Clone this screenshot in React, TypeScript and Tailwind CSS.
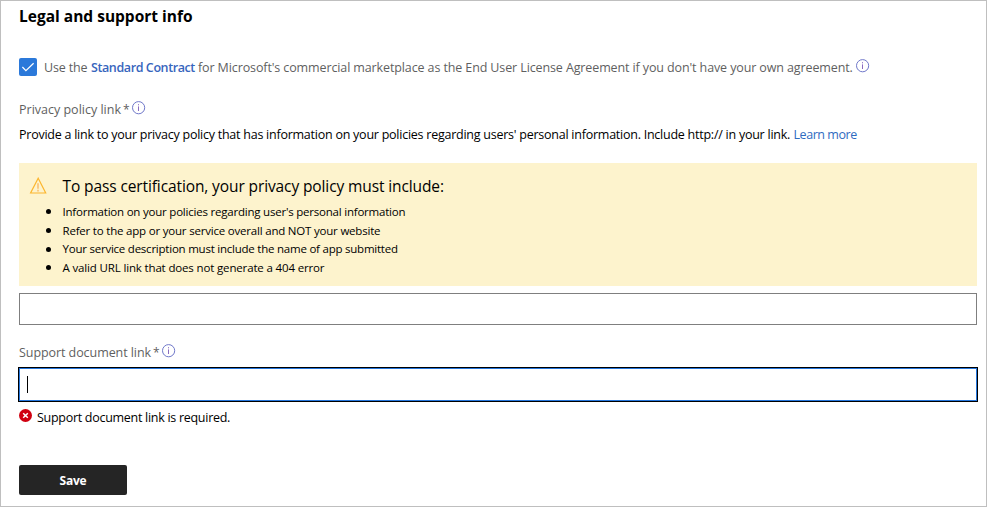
function InfoIcon({ className = "" }: { className?: string }) {
  return (
    <svg viewBox="0 0 14 14" className={"h-[14px] w-[14px] shrink-0 " + className} fill="none">
      <circle cx="6.6" cy="6.7" r="6.1" stroke="#6871c6" strokeWidth="0.95" />
      <path d="M6.5 3.2v1.1M6.5 5.4v4.6" stroke="#8a6cc0" strokeWidth="1" />
    </svg>
  );
}

function WarningIcon() {
  return (
    <svg viewBox="0 0 18 17" className="h-[17px] w-[18px] shrink-0" fill="none">
      <path d="M9.2 1.2 16.7 16H1.6Z" stroke="#fcb62f" strokeWidth="1.2" />
      <path d="M9 6.3v5.4M9 12.8v1.6" stroke="#f7a94a" strokeWidth="1.1" />
    </svg>
  );
}

function ErrorIcon() {
  return (
    <svg viewBox="0 0 13 13" className="mt-px h-[13px] w-[13px] shrink-0" fill="none">
      <circle cx="6.5" cy="6.5" r="6.5" fill="#d00010" />
      <path d="m4.2 4.2 4.6 4.6M8.8 4.2 4.2 8.8" stroke="#fff" strokeWidth="1.5" />
    </svg>
  );
}

function FieldLabel({ text, className }: { text: string; className: string }) {
  return (
    <div className="flex h-5 items-center text-[12.5px] leading-5 text-[#5f5f5f]">
      <span className={"font-medium " + className}>{text}</span>
      <span className="mb-px ml-[2px] w-[7px] text-[12px]">*</span>
      <InfoIcon className="mb-[4px] ml-[2px]" />
    </div>
  );
}

const requirements = [
  { text: "Information on your policies regarding user's personal information", tracking: "tracking-[-0.215px]" },
  { text: "Refer to the app or your service overall and NOT your website", tracking: "tracking-[-0.2px]" },
  { text: "Your service description must include the name of app submitted", tracking: "tracking-[-0.23px]" },
  { text: "A valid URL link that does not generate a 404 error", tracking: "tracking-[-0.15px]" },
];

export default function App() {
  return (
    <main className="flex h-[507px] w-[987px] flex-col items-start border border-[#bfbfbf] bg-white pt-[5px] pr-[9px] pl-[18px] font-['Open_Sans',sans-serif] whitespace-nowrap text-black">
      <h1 className="h-5 text-[15.5px] leading-5 font-bold">Legal and support info</h1>

      <div className="mt-[32px] flex h-5 items-center text-[12.5px] leading-5 font-medium text-[#5f5f5f]">
        <span className="mb-[2px] flex h-[18px] w-[18px] shrink-0 items-center justify-center rounded-[2px] bg-[#2b79da]">
          <svg viewBox="0 0 18 18" className="h-[18px] w-[18px]" fill="none">
            <path d="m3.4 9 3.5 3.7 7.7-7.4" stroke="#fff" strokeWidth="1.2" />
          </svg>
        </span>
        <span className="ml-[7px] w-[47px] tracking-[-0.15px]">Use the</span>
        <a className="w-[107px] font-semibold tracking-[-0.4px] text-[#3765bd]">Standard Contract</a>
        <span className="w-[655px] tracking-[-0.116px]">
          for Microsoft's commercial marketplace as the End User License Agreement if you don't have your own agreement.
        </span>
        <InfoIcon className="mb-[4px] ml-[3px]" />
      </div>

      <div className="mt-[22px]">
        <FieldLabel text="Privacy policy link" className="w-[102px]" />
      </div>

      <p className="mt-[5px] flex h-5 text-[12.5px] leading-5">
        <span className="w-[774.5px] tracking-[-0.245px]">
          Provide a link to your privacy policy that has information on your policies regarding users' personal information. Include
          http:// in your link.
        </span>
        <a className="tracking-[-0.44px] text-[#2f6bbf]">Learn more</a>
      </p>

      <section className="mt-[18px] flex h-[123px] w-[958px] bg-[#fdf3cd] pl-[10px]">
        <div className="w-[33px] pt-[14px]">
          <WarningIcon />
        </div>
        <div className="pt-[13px]">
          <h2 className="ml-[0.5px] h-5 text-[15.5px] leading-5 tracking-[-0.11px]">To pass certification, your privacy policy must include:</h2>
          <ul className="mt-[7px] -ml-[16px]">
            {requirements.map((item) => (
              <li key={item.text} className="flex h-[18.67px] items-center text-[11.5px] leading-[18.67px]">
                <span className="mr-[11.5px] mb-[1px] h-[5px] w-[5px] rounded-full bg-black" />
                <span className={item.tracking}>{item.text}</span>
              </li>
            ))}
          </ul>
        </div>
      </section>

      <input className="mt-[7px] h-8 w-[958px] shrink-0 border border-[#7f7f7f] px-2 outline-none" />

      <div className="mt-[18px]">
        <FieldLabel text="Support document link" className="w-[132px] tracking-[-0.07px]" />
      </div>

      <div className="mt-[4px] -ml-px flex h-[35px] w-[960px] items-center border border-black">
        <div className="flex h-[33px] w-[958px] items-center border border-[#2576dc] pl-[7px]">
          <span className="h-[17px] w-px bg-black" />
        </div>
      </div>

      <div className="mt-[6px] flex h-5 text-[12.5px] leading-5">
        <ErrorIcon />
        <span className="ml-[5px] tracking-[-0.285px]">Support document link is required.</span>
      </div>

      <button className="mt-[37px] h-[30px] w-[108px] rounded-[2px] bg-[#252525] pt-px text-[12px] leading-[29px] font-bold tracking-[-0.2px] text-white">
        Save
      </button>
    </main>
  );
}
